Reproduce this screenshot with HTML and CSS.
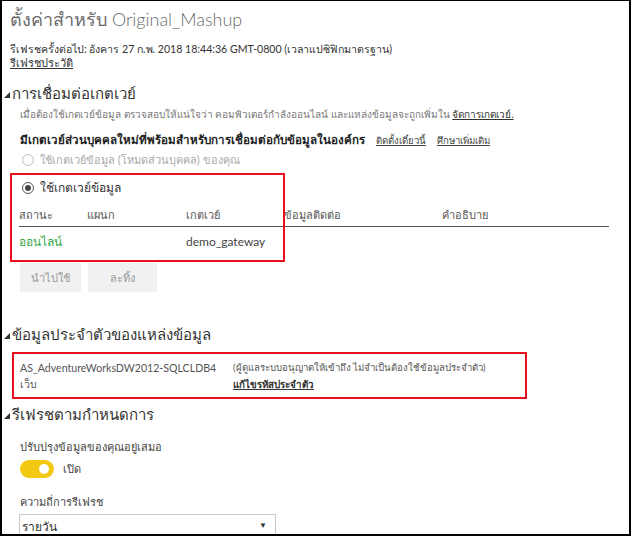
FILE: index.html
```html
<!DOCTYPE html>
<html lang="th">
<head>
<meta charset="utf-8">
<link rel="stylesheet" href="styles.css">
</head>
<body>
<div class="frame">
  <h1 class="title">ตั้งค่าสำหรับ Original_Mashup</h1>
  <div class="next">รีเฟรชครั้งต่อไป: อังคาร 27 ก.พ. 2018 18:44:36 GMT-0800 (เวลาแปซิฟิกมาตรฐาน)</div>
  <a class="link hist">รีเฟรชประวัติ</a>

  <h2 class="sec sec-gw"><svg class="tri" width="6" height="6" viewBox="0 0 6 6"><polygon points="6,0 6,6 0,6" fill="#333"/></svg>การเชื่อมต่อเกตเวย์</h2>
  <div class="desc">เมื่อต้องใช้เกตเวย์ข้อมูล ตรวจสอบให้แน่ใจว่า คอมพิวเตอร์กำลังออนไลน์ และแหล่งข้อมูลจะถูกเพิ่มใน <a class="link dark">จัดการเกตเวย์.</a></div>
  <div class="promo"><b>มีเกตเวย์ส่วนบุคคลใหม่ที่พร้อมสำหรับการเชื่อมต่อกับข้อมูลในองค์กร</b><a class="link">ติดตั้งเดี๋ยวนี้</a><a class="link">ศึกษาเพิ่มเติม</a></div>
  <div class="radio disabled"><span class="circle"></span>ใช้เกตเวย์ข้อมูล (โหมดส่วนบุคคล) ของคุณ</div>

  <div class="gwwrap">
    <div class="redbox box1"></div>
    <div class="radio checked"><span class="circle"><span class="dot"></span></span>ใช้เกตเวย์ข้อมูล</div>
    <div class="table">
      <div class="row head">
        <span class="c1">สถานะ</span><span class="c2">แผนก</span><span class="c3">เกตเวย์</span><span class="c4">ข้อมูลติดต่อ</span><span class="c5">คำอธิบาย</span>
      </div>
      <div class="row body">
        <span class="c1 online">ออนไลน์</span><span class="c2"></span><span class="c3">demo_gateway</span><span class="c4"></span><span class="c5"></span>
      </div>
    </div>
  </div>
  <div class="buttons">
    <span class="btn b1">นำไปใช้</span><span class="btn b2">ละทิ้ง</span>
  </div>

  <h2 class="sec sec-cred"><svg class="tri" width="6" height="6" viewBox="0 0 6 6"><polygon points="6,0 6,6 0,6" fill="#333"/></svg>ข้อมูลประจำตัวของแหล่งข้อมูล</h2>
  <div class="cred">
    <div class="credcol1">
      <div>AS_AdventureWorksDW2012-SQLCLDB4</div>
      <div>เว็บ</div>
    </div>
    <div class="credcol2">
      <div class="note">(ผู้ดูแลระบบอนุญาตให้เข้าถึง ไม่จำเป็นต้องใช้ข้อมูลประจำตัว)</div>
      <a class="link dark edit">แก้ไขรหัสประจำตัว</a>
    </div>
  </div>

  <h2 class="sec sec-ref"><svg class="tri" width="6" height="6" viewBox="0 0 6 6"><polygon points="6,0 6,6 0,6" fill="#333"/></svg>รีเฟรชตามกำหนดการ</h2>
  <div class="label keep">ปรับปรุงข้อมูลของคุณอยู่เสมอ</div>
  <div class="toggle-row"><span class="toggle"><span class="knob"></span></span><span class="on">เปิด</span></div>
  <div class="label freq">ความถี่การรีเฟรช</div>
  <div class="select"><span>รายวัน</span><span class="arrow">▼</span></div>
</div>
</body>
</html>
```
FILE: styles.css
```css
html, body { margin: 0; padding: 0; background: #fff; }
body { font-family: "Lato", "Open Sans", "Noto Sans", sans-serif; color: #333; }
.frame {
  width: 631px; height: 536px; box-sizing: border-box;
  border: 2px solid #000; border-top-width: 1px;
  overflow: hidden; padding: 0 0 0 8px;
}
.title { margin: 6px 0 0 0; font-size: 18px; font-weight: 300; color: #6b6b6b; line-height: 24px; }
.next { margin-top: 11px; font-size: 10.6px; line-height: 14px; color: #333; }
.link { text-decoration: underline; color: #333; cursor: pointer; }
.hist { display: block; font-size: 11px; line-height: 14px; }
.sec { display: flex; align-items: center; margin: 0; font-size: 15px; font-weight: 400; color: #333; line-height: 20px; margin-left: -6px; }
.tri { margin-right: 2px; margin-top: 4px; }
.sec-gw { margin-top: 13px; }
.desc { margin-top: 4px; margin-left: 10px; font-size: 10px; line-height: 14px; color: #777; }
.desc .dark { color: #333; }
.promo { margin-top: 11px; margin-left: 10px; font-size: 11.6px; line-height: 16px; display: flex; gap: 11px; align-items: baseline; }
.promo b { color: #222; margin-right: 0; }
.promo .link { font-size: 9.6px; color: #444; }
.radio { display: flex; align-items: center; font-size: 11px; line-height: 16px; }
.circle { width: 10px; height: 10px; border: 1px solid #888; border-radius: 50%; margin-right: 6px; display: inline-flex; align-items: center; justify-content: center; }
.disabled { color: #aaa; margin-top: 3px; margin-left: 12px; }
.disabled .circle { border-color: #bbb; }
.checked { color: #333; margin-left: 3px; padding-top: 7px; font-size: 12px; }
.checked .circle { border-color: #555; border-width: 1.5px; }
.dot { width: 6px; height: 6px; border-radius: 50%; background: #444; }
.gwwrap { position: relative; margin-top: 5px; margin-left: 9px; padding-bottom: 12px; }
.redbox { position: absolute; border: 2px solid #e8101c; box-sizing: border-box; pointer-events: none; }
.box1 { left: -9px; top: 0; width: 275px; height: 89px; }
.table { margin-top: 11px; width: 590px; font-size: 11px; }
.row { display: grid; grid-template-columns: 68px 99px 98px 158px 1fr; }
.row.head { color: #555; border-bottom: 1px solid #555; line-height: 16px; padding-bottom: 3px; }
.row.body { line-height: 16px; padding-top: 7px; font-size: 12px; color: #444; }
.online { color: #33a845; }
.buttons { display: flex; gap: 7px; margin-left: 10px; margin-top: 1px; }
.btn { background: #f1f1f1; color: #999; font-size: 11px; height: 29px; display: flex; align-items: center; justify-content: center; }
.b1 { width: 61px; }
.b2 { width: 69px; }
.sec-cred { margin-top: 32px; }
.cred { margin-top: 8px; margin-left: 2px; width: 515px; height: 47px; box-sizing: border-box; border: 2px solid #e8101c; display: flex; padding: 6px 0 0 6px; font-size: 10.6px; line-height: 16px; color: #555; }
.credcol1 { width: 213px; }
.note { font-size: 9.6px; }
.edit { font-weight: 700; font-size: 9.8px; color: #333; }
.sec-ref { margin-top: 5px; }
.label { font-size: 11px; line-height: 16px; color: #444; margin-left: 10px; }
.keep { margin-top: 15px; }
.toggle-row { display: flex; align-items: center; margin-left: 10px; margin-top: 5px; gap: 9px; font-size: 11px; color: #444; }
.toggle { width: 34px; height: 18px; border-radius: 9px; background: #f2c811; position: relative; display: inline-block; }
.knob { position: absolute; right: 5px; top: 4px; width: 10px; height: 10px; border-radius: 50%; background: #fff; }
.freq { margin-top: 16px; }
.select { margin-left: 9px; margin-top: 4px; width: 257px; height: 24px; box-sizing: border-box; border: 1px solid #c8c8c8; display: flex; justify-content: space-between; align-items: flex-start; padding: 2px 8px 0 2px; font-size: 12px; color: #333; }
.arrow { font-size: 8px; color: #333; margin-top: 3px; }
```
